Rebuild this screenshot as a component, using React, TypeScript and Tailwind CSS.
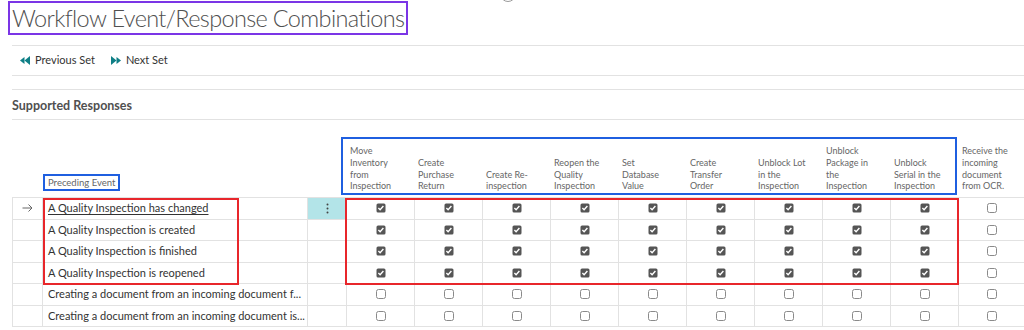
import React, { FC } from "react";

const responses: string[][] = [
  ["Move", "Inventory", "from", "Inspection"],
  ["Create", "Purchase", "Return"],
  ["Create Re-", "inspection"],
  ["Reopen the", "Quality", "Inspection"],
  ["Set", "Database", "Value"],
  ["Create", "Transfer", "Order"],
  ["Unblock Lot", "in the", "Inspection"],
  ["Unblock", "Package in", "the", "Inspection"],
  ["Unblock", "Serial in the", "Inspection"],
  ["Receive the", "incoming", "document", "from OCR."],
];

const quality = [true, true, true, true, true, true, true, true, true, false];
const none = [false, false, false, false, false, false, false, false, false, false];

const events = [
  { name: "A Quality Inspection has changed", checks: quality, current: true },
  { name: "A Quality Inspection is created", checks: quality },
  { name: "A Quality Inspection is finished", checks: quality },
  { name: "A Quality Inspection is reopened", checks: quality },
  { name: "Creating a document from an incoming document f...", checks: none },
  { name: "Creating a document from an incoming document is...", checks: none },
];

const cols = "grid grid-cols-[30px_265px_39px_repeat(9,68px)_1fr]";

const Check: FC<{ on: boolean }> = ({ on }) =>
  on ? (
    <svg width="10" height="10" viewBox="0 0 10 10">
      <rect x="0.5" y="0.5" width="9" height="9" rx="1.5" fill="#555" />
      <polyline points="2.4,5 4.1,6.7 7.4,3" fill="none" stroke="#fff" strokeWidth="1.4" />
    </svg>
  ) : (
    <svg width="10" height="10" viewBox="0 0 10 10">
      <rect x="0.5" y="0.5" width="9" height="9" rx="2" fill="#fff" stroke="#8a8a8a" />
    </svg>
  );

const PrevIcon = () => (
  <svg width="10" height="9" viewBox="0 0 10 9">
    <polygon points="0,4.5 4.5,1 4.5,8" fill="#0f7f86" />
    <polygon points="4.5,4.5 10,0 10,9" fill="#0f7f86" />
  </svg>
);

const NextIcon = () => (
  <svg width="10" height="9" viewBox="0 0 10 9">
    <polygon points="0,0 5.5,4.5 0,9" fill="#0f7f86" />
    <polygon points="5.5,1 10,4.5 5.5,8" fill="#0f7f86" />
  </svg>
);

const App: FC = () => {
  return (
    <div className="relative h-[330px] w-[1024px] overflow-hidden bg-white font-['Lato',sans-serif] text-[#333]">
      {/* spinner peeking in at the top */}
      <svg className="absolute left-[499px] top-[-12px]" width="18" height="16" viewBox="0 0 18 16">
        <circle cx="9" cy="6" r="7.5" fill="none" stroke="#9a9a9a" strokeWidth="1" />
      </svg>

      <div className="pl-[8px] pt-[1px]">
        <h1 className="inline-block h-[34px] border-2 border-[#7b35e6] px-[2px] pt-[1px] text-[23.5px] font-light leading-[29px] tracking-[-0.65px] text-[#505050]">
          Workflow Event/Response Combinations
        </h1>
      </div>

      <div className="ml-[12px] mt-[10px] border-t border-[#e2e2e2]" />
      <div className="ml-[12px] flex h-[30px] items-center border-b border-[#e2e2e2] pl-[8px] text-[11px]">
        <button className="flex items-center gap-[5px]">
          <PrevIcon />
          <span>Previous Set</span>
        </button>
        <button className="ml-[16px] flex items-center gap-[5px]">
          <NextIcon />
          <span>Next Set</span>
        </button>
      </div>

      <div className="ml-[12px] mt-[13px] flex h-[31px] items-center border-y border-[#e2e2e2] pt-[3px] text-[12.5px] font-bold text-[#505050]">
        Supported Responses
      </div>

      <div className="pl-[12px]">
        <div className={`${cols} h-[78px] border-b border-[#e2e2e2]`}>
          <div />
          <div className="flex items-end pb-[6px]">
            <span className="ml-[1px] border-2 border-[#1f5fe0] px-[3px] text-[9.5px] leading-[13px] text-[#666]">
              Preceding Event
            </span>
          </div>
          <div />
          {responses.map((lines, i) => (
            <div key={i} className="flex flex-col justify-end pb-[5px] pl-[4px] text-[9px] leading-[11.7px] text-[#666]">
              {lines.map((l) => (
                <span key={l} className="whitespace-nowrap">
                  {l}
                </span>
              ))}
            </div>
          ))}
        </div>

        {events.map((ev, r) => (
          <div key={r} className={`${cols} h-[21.5px] border-b border-[#e2e2e2] text-[11px]`}>
            <div className="flex items-center justify-center border-l border-[#e2e2e2]">
              {ev.current && (
                <svg width="11" height="8" viewBox="0 0 11 8">
                  <path d="M0.5 4H10M6.5 0.5L10 4L6.5 7.5" fill="none" stroke="#666" strokeWidth="1" />
                </svg>
              )}
            </div>
            <div className="flex items-center overflow-hidden whitespace-nowrap border-l border-[#e2e2e2] pl-[5px]">
              <span className={ev.current ? "underline underline-offset-2" : ""}>{ev.name}</span>
            </div>
            <div className={`flex items-center justify-center border-l border-[#e2e2e2] ${ev.current ? "bg-[#b3e4e8]" : ""}`}>
              {ev.current && (
                <svg width="3" height="11" viewBox="0 0 3 11">
                  <circle cx="1.5" cy="1.5" r="1" fill="#444" />
                  <circle cx="1.5" cy="5.5" r="1" fill="#444" />
                  <circle cx="1.5" cy="9.5" r="1" fill="#444" />
                </svg>
              )}
            </div>
            {ev.checks.map((c, i) => (
              <div key={i} className="flex items-center justify-center border-l border-[#e2e2e2]">
                <Check on={c} />
              </div>
            ))}
          </div>
        ))}
      </div>

      {/* annotation boxes */}
      <div className="pointer-events-none absolute left-[341px] top-[137px] h-[58px] w-[616px] border-2 border-[#1f5fe0]" />
      <div className="pointer-events-none absolute left-[43px] top-[198px] h-[87px] w-[196px] border-2 border-[#e8262b]" />
      <div className="pointer-events-none absolute left-[345px] top-[198px] h-[87px] w-[614px] border-2 border-[#e8262b]" />
    </div>
  );
};

export default App;
